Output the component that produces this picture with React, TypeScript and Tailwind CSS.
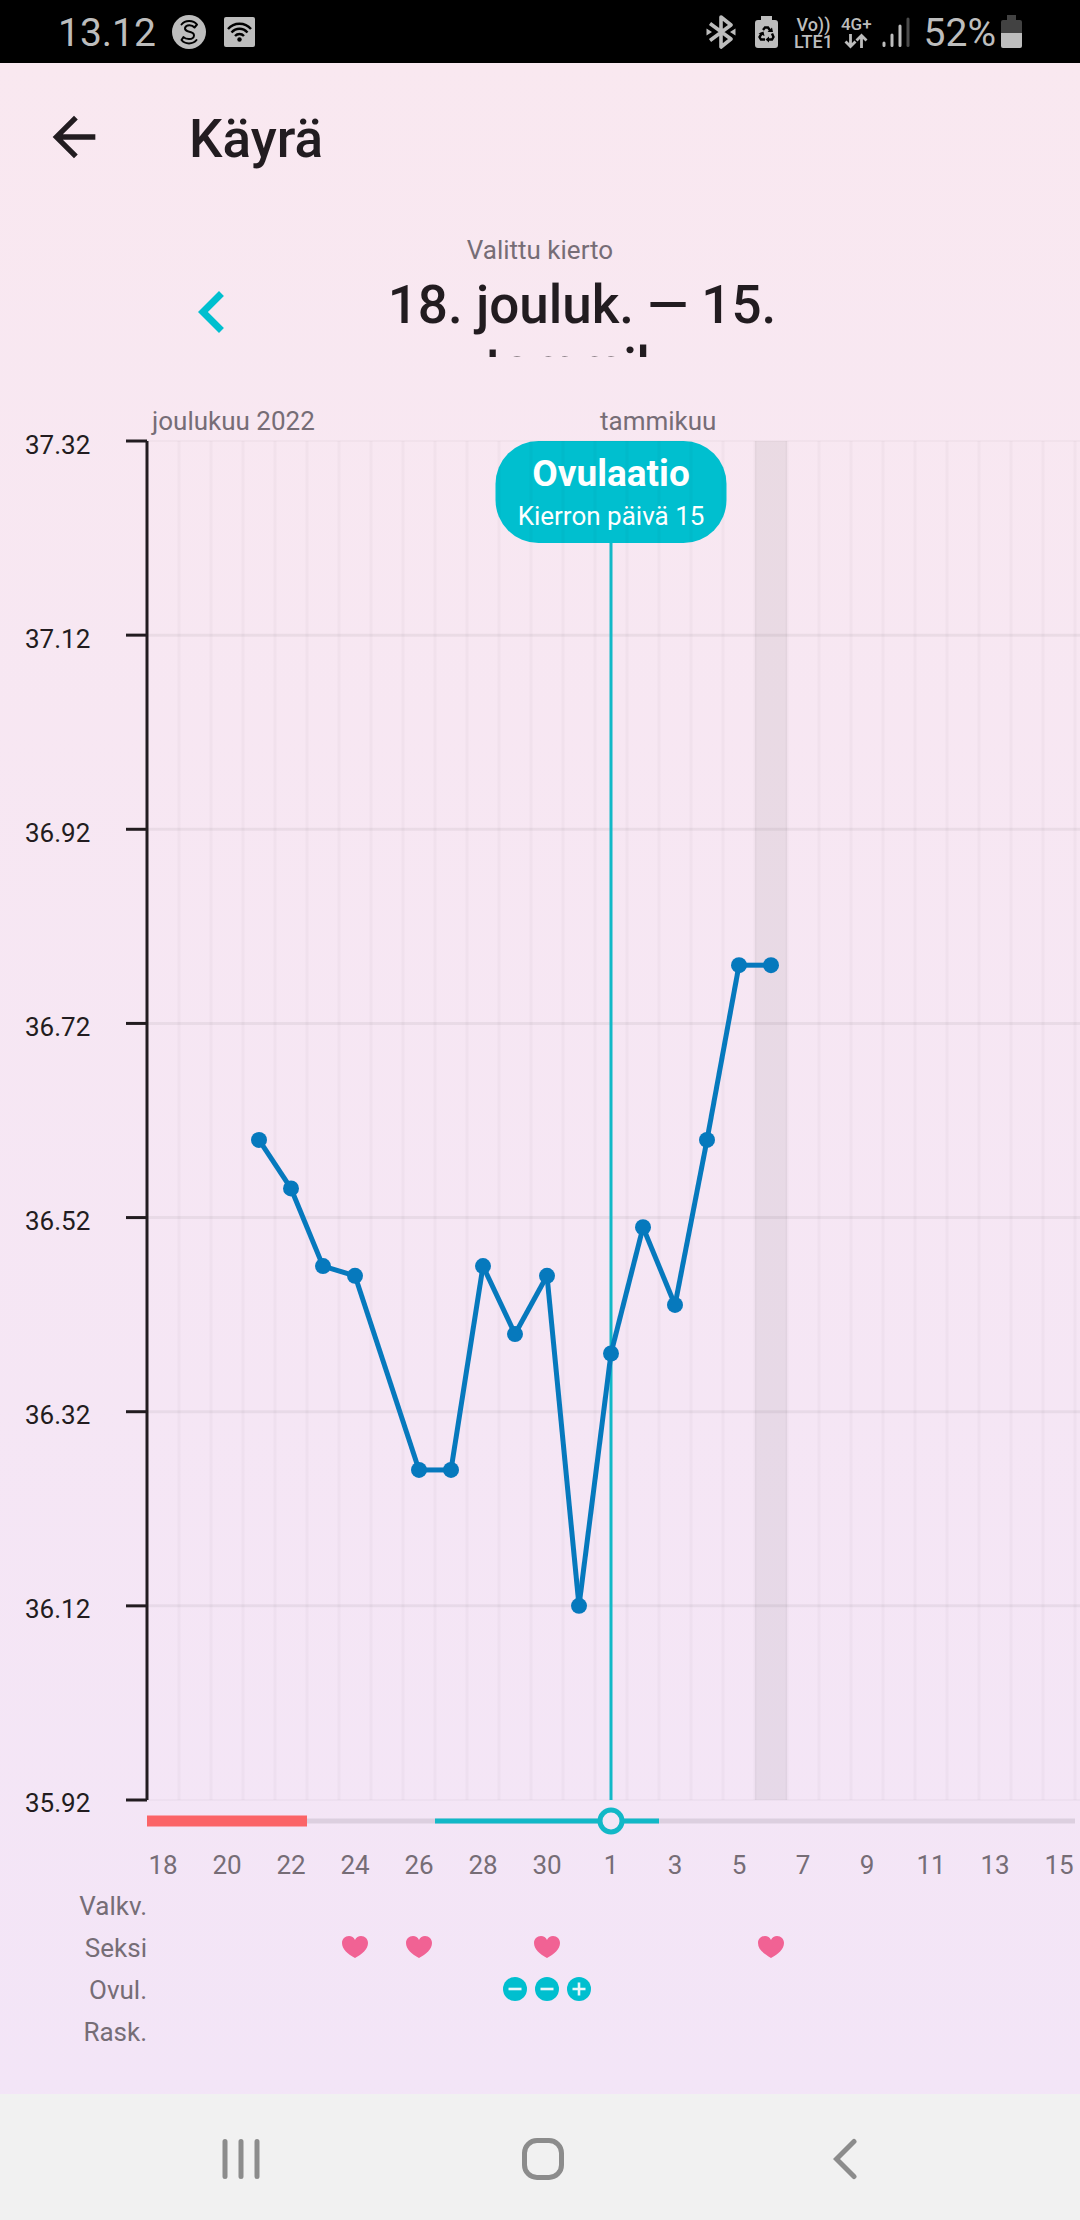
import type { ReactNode } from "react";
import { MdArrowBack } from "react-icons/md";

type Reading = { day: number; temp: number };

const DAY_COUNT = 29;
const OVULATION_DAY = 14;
const TODAY = 19;
const MAX_TEMP = 37.32;
const MIN_TEMP = 35.92;

const temps = ["37.32", "37.12", "36.92", "36.72", "36.52", "36.32", "36.12", "35.92"];

// day 0 is 18 December
const readings: Reading[] = [
    { day: 3, temp: 36.6 },
    { day: 4, temp: 36.55 },
    { day: 5, temp: 36.47 },
    { day: 6, temp: 36.46 },
    { day: 8, temp: 36.26 },
    { day: 9, temp: 36.26 },
    { day: 10, temp: 36.47 },
    { day: 11, temp: 36.4 },
    { day: 12, temp: 36.46 },
    { day: 13, temp: 36.12 },
    { day: 14, temp: 36.38 },
    { day: 15, temp: 36.51 },
    { day: 16, temp: 36.43 },
    { day: 17, temp: 36.6 },
    { day: 18, temp: 36.78 },
    { day: 19, temp: 36.78 },
];

const days = Array.from({ length: DAY_COUNT }, (_, i) => i);
const dateOf = (day: number) => (day < 14 ? day + 18 : day - 13);

const pct = (value: number) => `${value * 100}%`;
const edgeX = (day: number) => pct(day / DAY_COUNT);
const centerX = (day: number) => pct((day + 0.5) / DAY_COUNT);
const tempY = (temp: number) => pct((MAX_TEMP - temp) / (MAX_TEMP - MIN_TEMP));

const StatusBar = () => (
    <div className="flex h-[63px] shrink-0 items-center justify-between bg-black px-[58px] text-[#bdbdbd]">
        <div className="flex items-center">
            <span className="pt-[3px] text-[39px] leading-[60px]">13.12</span>
            <svg className="ml-4 size-[34px]" viewBox="0 0 34 34">
                <circle cx="17" cy="17" r="17" fill="#bdbdbd" />
                <path
                    d="M9.500 9.500 C13 5 21 4.500 25 9.500 L22.500 12.500 C20 9.500 14 9.500 13 13 C12.500 18.500 22 15 22 20.500 C21.500 25.500 13.500 24.500 11.500 22 L9.500 25 C13 29.500 21 29.500 24.500 25"
                    fill="none"
                    stroke="#000"
                    strokeWidth="2"
                    strokeLinejoin="round"
                    strokeLinecap="round"
                />
            </svg>
            <svg className="ml-[18px] h-[30px] w-[31px]" viewBox="0 0 31 30">
                <rect width="31" height="30" rx="2" fill="#bdbdbd" />
                <g fill="none" stroke="#000" strokeWidth="2.4">
                    <path d="M4 12 C10 5 21 5 27 12" />
                    <path d="M7.500 15.500 C12 10.500 19 10.500 23.500 15.500" />
                    <path d="M11 19 C13.500 16.300 17.500 16.300 20 19" />
                </g>
                <circle cx="15.500" cy="22.500" r="2.200" />
            </svg>
        </div>
        <div className="flex items-center">
            <svg className="h-[34px] w-[30px]" viewBox="0 0 30 34">
                <path
                    d="M4 8.500 L25 24 L15 32 V2 L25 10 L4 25.500"
                    fill="none"
                    stroke="#bdbdbd"
                    strokeWidth="3.600"
                    strokeLinejoin="round"
                />
                <path d="M0.500 13.500 L6 17 L0.500 20.500 Z M29.500 13.500 L24 17 L29.500 20.500 Z" fill="#bdbdbd" />
            </svg>
            <svg className="ml-[19px] h-[32px] w-[23px]" viewBox="0 0 23 32">
                <path d="M6 0 H17 V4 H20 Q23 4 23 7 V29 Q23 32 20 32 H3 Q0 32 0 29 V7 Q0 4 3 4 H6 Z" fill="#bdbdbd" />
                <g fill="none" stroke="#000" strokeWidth="2.400">
                    <path d="M8 14 L10 11.500 H13 L15.500 15" />
                    <path d="M17 17.500 L18.500 21 L17 23.500 H13" />
                    <path d="M10 23.500 H6 L4.500 21 L7 17" />
                </g>
                <path d="M12.500 16 H18 L17 11.500 Z M14 20.500 V26.500 L10.500 23.500 Z M3.500 17.500 L8.500 15.500 L9.500 20 Z" />
            </svg>
            <div className="ml-4 flex flex-col items-center pt-[2px] text-[18px] font-medium leading-[17px]">
                <span>Vo))</span>
                <span>LTE1</span>
            </div>
            <div className="ml-2 flex flex-col items-center pt-[2px] text-[17px] font-medium leading-[17px]">
                <span>4G+</span>
                <svg className="h-[16px] w-[24px]" viewBox="0 0 24 16">
                    <path
                        d="M6.500 1 V13 M1.500 8.500 L6.500 13.500 L11.500 8.500 M17.500 15 V3 M12.500 7.500 L17.500 2.500 L22.500 7.500"
                        fill="none"
                        stroke="#bdbdbd"
                        strokeWidth="2.800"
                    />
                </svg>
            </div>
            <svg className="ml-[10px] h-[32px] w-[28px]" viewBox="0 0 28 32" strokeWidth="3" strokeLinecap="round">
                <path d="M2 27 V29.500 M10 19 V29.500 M18 10 V29.500" stroke="#bdbdbd" />
                <path d="M26 3 V29.500" stroke="#4a4a4a" />
            </svg>
            <span className="ml-[14px] pt-[3px] text-[39px] leading-[60px]">52%</span>
            <svg className="ml-[5px] h-[33px] w-[21px]" viewBox="0 0 21 33">
                <path d="M6 0 H15 V5 H19 Q21 5 21 7 V18 H0 V7 Q0 5 2 5 H6 Z" fill="#424242" />
                <path d="M0 18 H21 V31 Q21 33 19 33 H2 Q0 33 0 31 Z" fill="#bdbdbd" />
            </svg>
        </div>
    </div>
);

const CycleHeader = () => (
    <header>
        <div className="flex h-[148px] items-center pl-[42px]">
            <button type="button" aria-label="Takaisin">
                <MdArrowBack className="size-[64px]" />
            </button>
            <h1 className="ml-[83px] pt-[4px] text-[53px] font-medium leading-[64px]">Käyrä</h1>
        </div>
        <div className="mt-6 text-center text-[26px] leading-[30px] text-[#766d76]">Valittu kierto</div>
        <div className="mt-[9px] flex h-[83px] items-start">
            <button type="button" aria-label="Edellinen kierto" className="ml-[170px] flex h-[76px] items-center">
                <svg className="size-[84px]" viewBox="0 0 24 24" fill="#00bfcf">
                    <path d="M15.410 7.410 14 6l-6 6 6 6 1.410-1.410L10.830 12z" />
                </svg>
            </button>
            <button
                type="button"
                className="ml-[108px] h-[83px] w-[440px] overflow-hidden text-[53px] font-medium leading-[62px]"
            >
                18. jouluk. — 15. tammik.
            </button>
        </div>
    </header>
);

const Plot = () => (
    <div className="relative min-h-[600px] flex-1">
        <div className="absolute left-1/2 flex h-[102px] w-[231px] -translate-x-1/2 flex-col items-center rounded-[43px] bg-[#00bfcf] pt-3 text-white">
            <span className="text-[37px] font-bold leading-[42px]">Ovulaatio</span>
            <span className="text-[26px] leading-[42px]">Kierron päivä 15</span>
        </div>
        <svg className="absolute inset-0 size-full overflow-visible" role="img" aria-label="Lämpökäyrä">
            <rect x={edgeX(TODAY)} y="0" width={edgeX(1)} height="100%" fill="#000" fillOpacity="0.055" />
            {days.map((day) => (
                <line
                    key={day}
                    x1={edgeX(day + 1)}
                    x2={edgeX(day + 1)}
                    y1="0"
                    y2="100%"
                    stroke="#000"
                    strokeOpacity="0.025"
                    strokeWidth="3"
                />
            ))}
            {temps.map((temp, i) => (
                <g key={temp}>
                    <line
                        x1="0"
                        x2="101%"
                        y1={tempY(Number(temp))}
                        y2={tempY(Number(temp))}
                        stroke="#000"
                        strokeOpacity="0.05"
                        strokeWidth={i === 0 || i === temps.length - 1 ? 1 : 3}
                    />
                    <line
                        x1="-21"
                        x2="0"
                        y1={tempY(Number(temp))}
                        y2={tempY(Number(temp))}
                        stroke="#221c20"
                        strokeWidth="3"
                    />
                </g>
            ))}
            <line x1="0" x2="0" y1="0" y2="100%" stroke="#221c20" strokeWidth="3" />
            <line
                x1={centerX(OVULATION_DAY)}
                x2={centerX(OVULATION_DAY)}
                y1="102"
                y2="100%"
                stroke="#12b8c7"
                strokeWidth="3"
            />
            {readings.slice(1).map((reading, i) => (
                <line
                    key={reading.day}
                    x1={centerX(readings[i].day)}
                    y1={tempY(readings[i].temp)}
                    x2={centerX(reading.day)}
                    y2={tempY(reading.temp)}
                    stroke="#0679bd"
                    strokeWidth="5"
                />
            ))}
            {readings.map((reading) => (
                <circle
                    key={reading.day}
                    cx={centerX(reading.day)}
                    cy={tempY(reading.temp)}
                    r="8"
                    fill="#0679bd"
                />
            ))}
        </svg>
    </div>
);

const PhaseTrack = () => (
    <svg className="mt-[7px] h-[28px] w-full overflow-visible">
        <line x1={edgeX(5)} x2="100%" y1="14" y2="14" stroke="#dccfdf" strokeWidth="5" />
        <line x1="0" x2={edgeX(5)} y1="14" y2="14" stroke="#fb6467" strokeWidth="11" />
        <line x1={edgeX(9)} x2={edgeX(16)} y1="14" y2="14" stroke="#12b8c7" strokeWidth="5" />
        <circle cx={centerX(OVULATION_DAY)} cy="14" r="11" fill="#f3e6f6" stroke="#12b8c7" strokeWidth="5" />
    </svg>
);

const Heart = () => (
    <svg className="h-[22px] w-[26px] shrink-0" viewBox="0 0 26 22" fill="#f16294">
        <path d="M13 22 C6 18 0 13.500 0 7 C0 3 3 0 7 0 C9.500 0 12 1.500 13 4 C14 1.500 16.500 0 19 0 C23 0 26 3 26 7 C26 13.500 20 18 13 22 Z" />
    </svg>
);

const TestResult = ({ positive }: { positive?: boolean }) => (
    <svg className="size-[24px] shrink-0" viewBox="0 0 24 24">
        <circle cx="12" cy="12" r="12" fill="#00bfcf" />
        <path d={positive ? "M5.500 12 H18.500 M12 5.500 V18.500" : "M5.500 12 H18.500"} stroke="#e8f6fa" strokeWidth="2.600" />
    </svg>
);

const logs: { label: string; marks: Record<number, ReactNode> }[] = [
    { label: "Valkv.", marks: {} },
    { label: "Seksi", marks: { 6: <Heart />, 8: <Heart />, 12: <Heart />, 19: <Heart /> } },
    { label: "Ovul.", marks: { 11: <TestResult />, 12: <TestResult />, 13: <TestResult positive /> } },
    { label: "Rask.", marks: {} },
];

const NavBar = () => (
    <nav className="flex h-[126px] shrink-0 items-center justify-center bg-[#f1f1f1] pt-[3px] pl-1.5 text-[#8c8c8c]">
        <button type="button" aria-label="Viimeisimmät" className="flex w-[302px] justify-center">
            <svg className="h-[42px] w-[38px]" viewBox="0 0 38 42">
                <path
                    d="M3 3.500 V38.500 M19 3.500 V38.500 M35 3.500 V38.500"
                    stroke="currentColor"
                    strokeWidth="5"
                    strokeLinecap="round"
                />
            </svg>
        </button>
        <button type="button" aria-label="Koti" className="flex w-[302px] justify-center">
            <span className="size-[42px] rounded-[15px] border-5 border-current" />
        </button>
        <button type="button" aria-label="Takaisin" className="flex w-[302px] justify-center">
            <svg className="h-[42px] w-[24px]" viewBox="0 0 24 42">
                <path
                    d="M21 3.500 L3.500 21 L21 38.500"
                    fill="none"
                    stroke="currentColor"
                    strokeWidth="5"
                    strokeLinecap="round"
                />
            </svg>
        </button>
    </nav>
);

export default function App() {
    return (
        <div className="flex min-h-screen flex-col overflow-hidden font-[Roboto,sans-serif] text-[#221c20]">
            <StatusBar />
            <main className="flex flex-1 flex-col bg-linear-to-b from-[#f9e8f0] to-[#f3e5f7]">
                <CycleHeader />
                <section className="mt-[44px] flex flex-1 pr-[5px] text-[26px] leading-[40px]">
                    <div className="flex w-[147px] shrink-0 flex-col">
                        <div className="mt-[24px] flex flex-1 flex-col justify-between pl-[25px]">
                            {temps.map((temp) => (
                                <span key={temp}>{temp}</span>
                            ))}
                        </div>
                        <div className="mt-[62px] text-right leading-[42px] text-[#766d76]">
                            {logs.map((log) => (
                                <div key={log.label}>{log.label}</div>
                            ))}
                        </div>
                    </div>
                    <div className="flex flex-1 flex-col">
                        <div className="grid h-[40px] grid-cols-[14fr_15fr] text-[#766d76]">
                            <span className="pl-[5px]">joulukuu 2022</span>
                            <span className="pl-[5px]">tammikuu</span>
                        </div>
                        <Plot />
                        <PhaseTrack />
                        <div className="mt-[10px] grid h-[40px] grid-cols-[repeat(29,minmax(0,1fr))] text-[#766d76]">
                            {days.map((day) => (
                                <span key={day} className="flex justify-center">
                                    {day % 2 === 0 && dateOf(day)}
                                </span>
                            ))}
                        </div>
                        {logs.map((log) => (
                            <div key={log.label} className="grid h-[42px] grid-cols-[repeat(29,minmax(0,1fr))]">
                                {days.map((day) => (
                                    <span key={day} className="flex items-center justify-center pb-[2px]">
                                        {log.marks[day]}
                                    </span>
                                ))}
                            </div>
                        ))}
                    </div>
                </section>
                <div className="h-[41px]" />
            </main>
            <NavBar />
        </div>
    );
}
